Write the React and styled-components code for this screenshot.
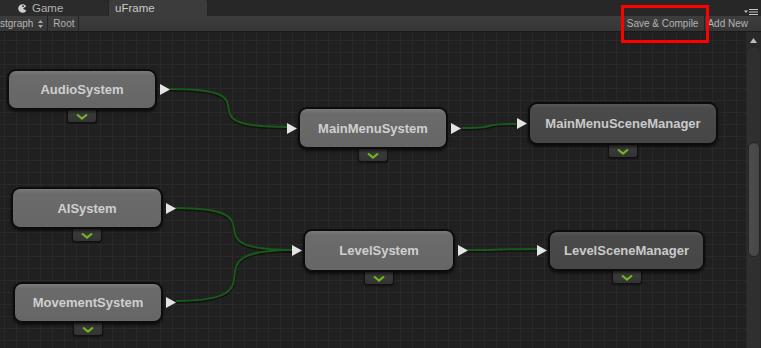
import React from 'react'
import styled, { createGlobalStyle } from 'styled-components'

const GlobalStyle = createGlobalStyle`
  html, body {
    margin: 0;
    padding: 0;
    background: #202020;
    overflow: hidden;
  }
  body {
    font-family: "Liberation Sans", Arial, sans-serif;
  }
`

const nodes = [
  { name: 'AudioSystem', x: 7, y: 37, w: 150, h: 41, out: true },
  { name: 'MainMenuSystem', x: 298, y: 75, w: 150, h: 42, in: true, out: true },
  { name: 'MainMenuSceneManager', x: 528, y: 70, w: 190, h: 43, in: true, dark: true },
  { name: 'AISystem', x: 11, y: 155, w: 152, h: 42, out: true },
  { name: 'LevelSystem', x: 303, y: 197, w: 152, h: 43, in: true, out: true },
  { name: 'LevelSceneManager', x: 548, y: 198, w: 157, h: 41, in: true, dark: true },
  { name: 'MovementSystem', x: 13, y: 250, w: 150, h: 41, out: true },
]

// wires between pins, canvas coordinates
const wires = [
  'M170,57 C282,57 175,95 287,95',
  'M462,96 C504,96 474,92 516,92',
  'M175,176 C287,176 181,218 293,218',
  'M176,269 C288,269 181,218 293,218',
  'M467,218 C509,218 495,217 537,217',
]

const Node = ({ node }) => (
  <NodeWrap $x={node.x} $y={node.y} $w={node.w}>
    <NodeBox $h={node.h} $dark={node.dark}>
      {node.name}
      {node.in && (
        <Pin $side="in" viewBox="0 0 10 11">
          <polygon points="0,0 10,5.5 0,11" />
        </Pin>
      )}
      {node.out && (
        <Pin $side="out" viewBox="0 0 10 11">
          <polygon points="0,0 10,5.5 0,11" />
        </Pin>
      )}
    </NodeBox>
    <Expander>
      <svg width="12" height="7" viewBox="0 0 12 7">
        <polyline points="1,1.5 6,5.5 11,1.5" fill="none" stroke="#72b51f" strokeWidth="2.2" />
      </svg>
    </Expander>
  </NodeWrap>
)

const App = () => {
  return (
    <Window>
      <GlobalStyle />
      <TabBar>
        <Tab $w={108} $pad={18}>
          <svg width="9" height="9" viewBox="0 0 10 10">
            <path d="M9.2,2.6 A4.8,4.8 0 1 0 9.2,7.4 L5.6,5 Z" fill="#cfcfcf" />
            <circle cx="5.6" cy="2.4" r="1" fill="#2b2b2b" />
          </svg>
          Game
        </Tab>
        <Tab $w={98} $pad={6} $active>uFrame</Tab>
        <MenuIcon width="14" height="6" viewBox="0 0 14 6">
          <polygon points="0,1.5 4,1.5 2,4" fill="#c8c8c8" />
          <rect x="5" y="0" width="9" height="1" fill="#c8c8c8" />
          <rect x="5" y="2.5" width="9" height="1" fill="#c8c8c8" />
          <rect x="5" y="5" width="9" height="1" fill="#c8c8c8" />
        </MenuIcon>
      </TabBar>
      <Toolbar>
        <ToolButton $pl={0} $pr={4}>
          stgraph
          <svg width="5" height="8" viewBox="0 0 5 8">
            <polygon points="0,3 2.5,0 5,3" fill="#a8a8a8" />
            <polygon points="0,5 2.5,8 5,5" fill="#a8a8a8" />
          </svg>
        </ToolButton>
        <ToolButton $pl={5} $pr={4}>Root</ToolButton>
        <ToolRight>
          <ToolButton $pl={5} $pr={6} $left>Save &amp; Compile</ToolButton>
          <ToolButton $pl={2} $pr={2} $noRight>Add New</ToolButton>
        </ToolRight>
      </Toolbar>
      <Body>
        <Canvas>
          <Wires width="746" height="316">
            {wires.map((d, i) => (
              <g key={i}>
                <path d={d} fill="none" stroke="rgba(0,0,0,0.45)" strokeWidth="3" transform="translate(0,1)" />
                <path d={d} fill="none" stroke="#195a19" strokeWidth="2" />
              </g>
            ))}
          </Wires>
          {nodes.map((n) => (
            <Node key={n.name} node={n} />
          ))}
        </Canvas>
        <Scrollbar>
          <svg width="7" height="5" viewBox="0 0 7 5">
            <polygon points="0,5 3.5,0 7,5" fill="#bdbdbd" />
          </svg>
          <Track>
            <Thumb />
          </Track>
        </Scrollbar>
      </Body>
      <Highlight />
    </Window>
  )
}

const Window = styled.div`
  position: relative;
  width: 761px;
  height: 348px;
  display: flex;
  flex-direction: column;
  background: #202020;
  overflow: hidden;
`

const TabBar = styled.div`
  flex: 0 0 16px;
  display: flex;
  align-items: stretch;
  gap: 1px;
  background: #272727;
`

const Tab = styled.div`
  width: ${(p) => p.$w}px;
  box-sizing: border-box;
  padding-left: ${(p) => p.$pad}px;
  display: flex;
  align-items: center;
  gap: 5px;
  font-size: 11.5px;
  color: ${(p) => (p.$active ? '#c9c9c9' : '#b2b2b2')};
  background: ${(p) => (p.$active ? '#3c3c3c' : '#2b2b2b')};
  border-radius: 2px 2px 0 0;
`

const MenuIcon = styled.svg`
  margin: 9px 3px 0 auto;
`

const Toolbar = styled.div`
  flex: 0 0 16px;
  box-sizing: border-box;
  display: flex;
  align-items: stretch;
  background: linear-gradient(#3d3d3d, #363636);
  border-bottom: 1px solid #1a1a1a;
`

const ToolButton = styled.div`
  display: flex;
  align-items: center;
  gap: 5px;
  padding: 0 ${(p) => p.$pr}px 0 ${(p) => p.$pl}px;
  font-size: 10px;
  color: #b3b3b3;
  white-space: nowrap;
  border-right: ${(p) => (p.$noRight ? 'none' : '1px solid #232323')};
  border-left: ${(p) => (p.$left ? '1px solid #232323' : 'none')};
`

const ToolRight = styled.div`
  margin-left: auto;
  padding-right: 11px;
  display: flex;
  align-items: stretch;
`

const Body = styled.div`
  flex: 1;
  display: flex;
  min-height: 0;
`

const Canvas = styled.div`
  position: relative;
  flex: 1;
  background-color: #202020;
  background-image: linear-gradient(#292929 1px, transparent 1px),
    linear-gradient(90deg, #292929 1px, transparent 1px);
  background-size: 12px 12px;
  background-position: 4px 8px;
  overflow: hidden;
`

const Wires = styled.svg`
  position: absolute;
  left: 0;
  top: 0;
`

const NodeWrap = styled.div`
  position: absolute;
  left: ${(p) => p.$x}px;
  top: ${(p) => p.$y}px;
  width: ${(p) => p.$w}px;
  display: flex;
  flex-direction: column;
  align-items: center;
`

const NodeBox = styled.div`
  position: relative;
  width: 100%;
  height: ${(p) => p.$h}px;
  box-sizing: border-box;
  display: flex;
  align-items: center;
  justify-content: center;
  border: 2px solid #0c0c0c;
  border-radius: 9px;
  background: ${(p) =>
    p.$dark
      ? 'linear-gradient(#575757, #4a4a4a 12%, #464646)'
      : 'linear-gradient(#7a7a7a, #6b6b6b 12%, #666666)'};
  box-shadow: 0 2px 3px rgba(0, 0, 0, 0.6);
  font-size: 13px;
  font-weight: bold;
  color: ${(p) => (p.$dark ? '#cacaca' : '#cfcfcf')};
  z-index: 1;
`

const Pin = styled.svg`
  position: absolute;
  top: 50%;
  width: 10px;
  height: 11px;
  margin-top: -5.5px;
  fill: #e4e4e4;
  ${(p) => (p.$side === 'in' ? 'left: -13px;' : 'right: -15px;')}
`

const Expander = styled.div`
  width: 30px;
  height: 14px;
  box-sizing: border-box;
  margin-top: -1px;
  display: flex;
  align-items: center;
  justify-content: center;
  padding-top: 2px;
  background: linear-gradient(#3e3e3e, #333333);
  border: 1px solid #111111;
  border-top: none;
  border-radius: 0 0 3px 3px;
  box-shadow: 0 1px 2px rgba(0, 0, 0, 0.5);
`

const Scrollbar = styled.div`
  flex: 0 0 15px;
  box-sizing: border-box;
  padding-top: 6px;
  display: flex;
  flex-direction: column;
  align-items: center;
  background: #292929;
`

const Track = styled.div`
  flex: 1;
  width: 13px;
  margin-top: 5px;
  box-sizing: border-box;
  padding-top: 94px;
  display: flex;
  flex-direction: column;
  align-items: center;
  background: #2f2f2f;
  border-radius: 6px 6px 0 0;
`

const Thumb = styled.div`
  width: 12px;
  height: 115px;
  border-radius: 6px;
  background: linear-gradient(90deg, #4c4c4c, #464646);
  border: 1px solid #242424;
  box-sizing: border-box;
`

const Highlight = styled.div`
  position: absolute;
  left: 621px;
  top: 5px;
  width: 88px;
  height: 38px;
  box-sizing: border-box;
  border: 3px solid #ff0000;
  pointer-events: none;
`

export default App
